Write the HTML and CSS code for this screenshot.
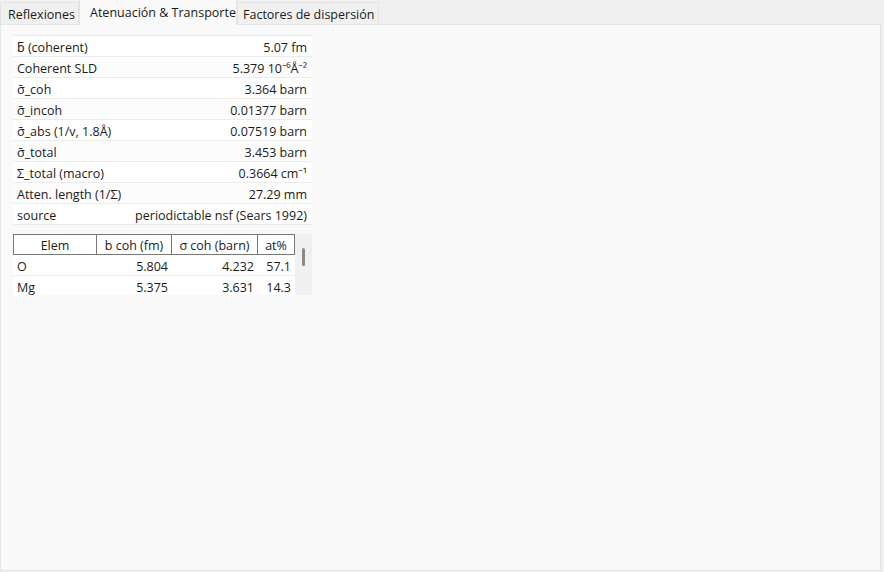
FILE: index.html
```html
<!DOCTYPE html>
<html lang="es">
<head>
  <meta charset="UTF-8" />
  <title>Atenuación &amp; Transporte</title>
  <link rel="stylesheet" href="styles.css">
</head>
<body>
  <div class="tabs">
    <div class="tab tab-first">Reflexiones</div>
    <div class="tab active">Atenuación &amp; Transporte</div>
    <div class="tab tab-last">Factores de dispersión</div>
  </div>

  <div class="pane">
    <div class="props">
      <div class="prop"><span>ƃ (coherent)</span><span>5.07 fm</span></div>
      <div class="prop"><span>Coherent SLD</span><span>5.379 10⁻⁶Å⁻²</span></div>
      <div class="prop"><span>σ̄_coh</span><span>3.364 barn</span></div>
      <div class="prop"><span>σ̄_incoh</span><span>0.01377 barn</span></div>
      <div class="prop"><span>σ̄_abs (1/v, 1.8Å)</span><span>0.07519 barn</span></div>
      <div class="prop"><span>σ̄_total</span><span>3.453 barn</span></div>
      <div class="prop"><span>Σ_total (macro)</span><span>0.3664 cm⁻¹</span></div>
      <div class="prop"><span>Atten. length (1/Σ)</span><span>27.29 mm</span></div>
      <div class="prop"><span>source</span><span>periodictable nsf (Sears 1992)</span></div>
    </div>

    <div class="elems">
      <div class="grid">
        <div class="head">Elem</div>
        <div class="head">b coh (fm)</div>
        <div class="head">σ coh (barn)</div>
        <div class="head">at%</div>

        <div class="cell name">O</div>
        <div class="cell">5.804</div>
        <div class="cell">4.232</div>
        <div class="cell">57.1</div>

        <div class="cell name">Mg</div>
        <div class="cell">5.375</div>
        <div class="cell">3.631</div>
        <div class="cell">14.3</div>
      </div>
      <div class="scrollbar"><div class="thumb"></div></div>
    </div>
  </div>
</body>
</html>
```

FILE: styles.css
```css
body {
  margin: 0;
  background: #f0f0f0;
  font-family: "Open Sans", "Noto Sans", sans-serif;
  font-size: 12.5px;
  color: #1b1b1b;
  height: 572px;
  overflow: hidden;
}

/* tab strip */
.tabs {
  display: flex;
  align-items: flex-end;
  height: 24px;
}

.tab {
  box-sizing: border-box;
  height: 22px;
  line-height: 23px;
  border: 1px solid #e3e3e3;
  border-bottom: none;
  background: #f0f0f0;
  white-space: nowrap;
  overflow: hidden;
}

.tab-first {
  width: 79px;
  padding-left: 7px;
}

.tab.active {
  width: 158px;
  height: 25px;
  margin-bottom: -1px;
  padding-left: 10px;
  line-height: 25px;
  background: #f9f9f9;
  border-color: #e5e5e5;
  border-top: none;
  position: relative;
  z-index: 1;
}

.tab-last {
  width: 142px;
  padding-left: 5px;
}

/* page area */
.pane {
  box-sizing: border-box;
  width: 881px;
  height: 547px;
  background: #f9f9f9;
  border: 1px solid #e5e5e5;
  padding: 10px 12px;
}

.props {
  width: 299px;
  border-top: 1px solid #ebebeb;
}

.prop {
  display: flex;
  justify-content: space-between;
  height: 20px;
  line-height: 23px;
  padding: 0 5px 0 4px;
  background: #fff;
  border-bottom: 1px solid #ebebeb;
  white-space: nowrap;
  overflow: hidden;
}

.prop:nth-child(even) {
  background: #fcfcfc;
}

/* element table with its scrollbar */
.elems {
  display: flex;
  width: 299px;
  height: 61px;
  margin-top: 9px;
  overflow: hidden;
}

.grid {
  display: grid;
  grid-template-columns: 84px 75px 86px 37px;
  grid-template-rows: 21px;
  grid-auto-rows: 21px;
  width: 282px;
  background: #fff;
  align-content: start;
}

.head {
  box-sizing: border-box;
  height: 21px;
  line-height: 21px;
  text-align: center;
  border: 1px solid #777;
  border-left: none;
  background: #fff;
  white-space: nowrap;
}

.head:first-child {
  border-left: 1px solid #777;
}

.cell {
  height: 20px;
  line-height: 23px;
  text-align: right;
  padding-right: 4px;
  border-bottom: 1px solid #ebebeb;
  overflow: hidden;
}

.cell.name {
  text-align: left;
  padding-left: 4px;
}

.scrollbar {
  width: 17px;
  background: #f0f0f0;
  position: relative;
}

.thumb {
  position: absolute;
  left: 7px;
  top: 14px;
  width: 3px;
  height: 18px;
  border-radius: 2px;
  background: #8a8a8a;
}
```
